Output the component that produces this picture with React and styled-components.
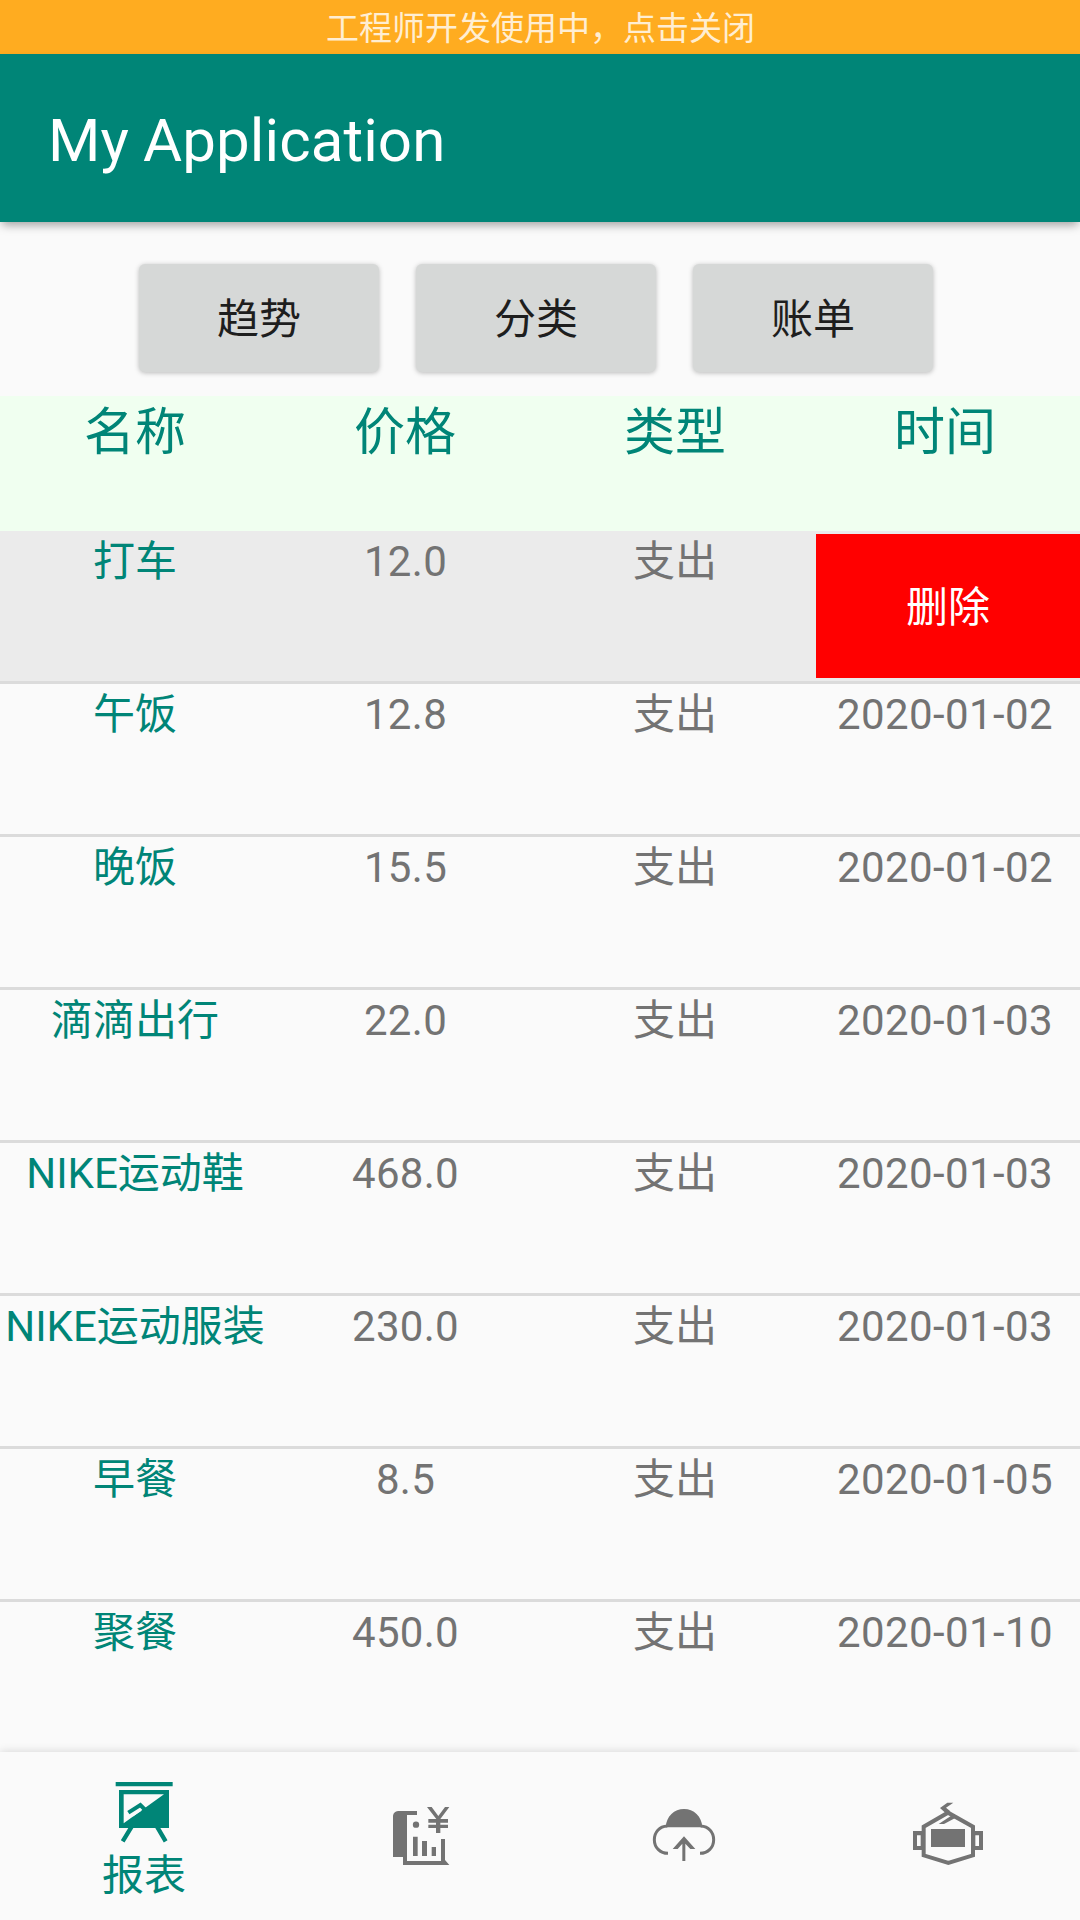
import React, { useState } from 'react';
import styled, { createGlobalStyle } from 'styled-components';

const GlobalStyle = createGlobalStyle`
  body {
    margin: 0;
    background: #fafafa;
  }
  * {
    box-sizing: border-box;
  }
`;

const Screen = styled.div`
  display: flex;
  flex-direction: column;
  width: 1080px;
  height: 1920px;
  overflow: hidden;
  background: #fafafa;
  color: #737373;
  font-family: Roboto, 'Noto Sans CJK SC', sans-serif;
  font-size: 42px;
`;

const DebugBanner = styled.div`
  flex: none;
  height: 54px;
  padding-left: 1px;
  line-height: 57px;
  background: #ffac20;
  color: #ffeed2;
  font-size: 33px;
  text-align: center;
`;

const AppBar = styled.header`
  flex: none;
  height: 168px;
  padding-left: 48px;
  background: #008577;
  box-shadow: 0 5px 9px -2px rgba(0, 0, 0, 0.36);
  color: #fff;
  font-size: 60px;
  line-height: 174px;
  letter-spacing: 0.1px;
  word-spacing: -1px;
`;

const ButtonBar = styled.div`
  flex: none;
  display: flex;
  gap: 37px;
  height: 174px;
  padding: 42px 0 0 139px;
`;

const Button = styled.button`
  width: 240px;
  height: 108px;
  padding: 0;
  border: none;
  border-radius: 6px;
  background: #d6d8d7;
  box-shadow: 0 1px 5px rgba(0, 0, 0, 0.26);
  color: #1e1e1e;
  font: inherit;
  line-height: 112px;
`;

const TableHead = styled.div`
  flex: none;
  display: grid;
  grid-template-columns: repeat(4, 270px);
  height: 135px;
  background: #f0fff0;
  color: #008577;
  font-size: 51px;
  line-height: 73px;
  text-align: center;
`;

const List = styled.div`
  flex: 1;
  min-height: 0;
  overflow: hidden;
`;

const Row = styled.div`
  display: grid;
  grid-template-columns: repeat(4, 270px);
  height: 153px;
  border-bottom: 3px solid ${props => (props.$last ? 'transparent' : '#dbdbdb')};
  background: ${props => (props.$open ? '#ebebeb' : 'transparent')};
  line-height: 61px;
  text-align: center;
`;

const Cell = styled.div`
  white-space: nowrap;
`;

const NameCell = styled(Cell)`
  color: #008577;
`;

const PriceCell = styled(Cell)`
  padding-left: 1px;
  letter-spacing: 0.3px;
`;

const DateCell = styled(Cell)`
  letter-spacing: 0.4px;
`;

const DeleteButton = styled.button`
  justify-self: end;
  width: 264px;
  height: 144px;
  margin-top: 3px;
  padding: 0;
  border: none;
  background: #f00;
  color: #fff;
  font: inherit;
  line-height: 147px;
`;

const BottomNav = styled.nav`
  flex: none;
  display: grid;
  grid-template-columns: 288px repeat(3, 264px);
  height: 168px;
  background: #fafafa;
  box-shadow: 0 0 9px rgba(0, 0, 0, 0.16);
`;

const NavItem = styled.a`
  display: flex;
  flex-direction: column;
  align-items: center;
  padding-top: ${props => (props.$active ? '24px' : '48px')};
  color: ${props => (props.$active ? '#008577' : '#737373')};
  line-height: 56px;

  svg {
    display: block;
    width: 72px;
    height: 72px;
  }
`;

const BoardIcon = () => (
  <svg viewBox="84 108 216 216" fill="currentColor">
    <path d="M107 126H278V139H107z" />
    <path fillRule="evenodd" d="M117 150H267V264H117zM131 163V250L252 163z" />
    <path d="M145 218L181 195L196 210" fill="none" stroke="currentColor" strokeWidth="12" />
    <path d="M157 227L183 210" stroke="#fafafa" strokeWidth="6" />
    <path d="M155 260L128 304M231 260L257 304" stroke="currentColor" strokeWidth="13" />
  </svg>
);

const LedgerIcon = () => (
  <svg viewBox="42 60 216 216" fill="currentColor">
    <path d="M69 231V107Q71 95 84 93H141V105H111V243H213V177H225V240L238 255H99V231z" />
    <circle cx="138" cy="134" r="9.5" />
    <path d="M129 170H143V228H129zM156 183H171V228H156zM185 201H198V228H185z" />
    <path d="M171 81H185L205 108L225 81H238L211 117H234V128H211V134H234V144H211V159H198V144H175V134H198V128H175V117H199z" />
  </svg>
);

const CloudIcon = () => (
  <svg viewBox="54 60 216 216" fill="currentColor">
    <path d="M107 142C109 108 133 87 162 87S215 108 217 142z" />
    <path
      d="M114 220C90 220 73 202 73 179C73 157 88 139 112 138M210 220C234 220 251 202 251 179C251 157 236 139 212 138"
      fill="none"
      stroke="currentColor"
      strokeWidth="9"
    />
    <path d="M128 207L162 169L196 207H181L166 191V243H157V191L143 207z" />
  </svg>
);

const RobotIcon = () => (
  <svg viewBox="66 60 216 216" fill="currentColor">
    <path d="M101 140V226L175 249L249 226V140L174 98z" fill="none" stroke="currentColor" strokeWidth="12" />
    <path d="M150 84L172 68H190L168 83L181 94L169 101z" />
    <path d="M146 132L187 105L200 112L162 132z" />
    <path d="M123 147H225V201H123z" />
    <path
      fillRule="evenodd"
      d="M69 153H96V210H69zM81 166V198H92V166zM254 153H279V210H254zM256 166V198H267V166z"
    />
  </svg>
);

const bills = [
  { name: '打车', price: '12.0', type: '支出', date: '2020-01-02' },
  { name: '午饭', price: '12.8', type: '支出', date: '2020-01-02' },
  { name: '晚饭', price: '15.5', type: '支出', date: '2020-01-02' },
  { name: '滴滴出行', price: '22.0', type: '支出', date: '2020-01-03' },
  { name: 'NIKE运动鞋', price: '468.0', type: '支出', date: '2020-01-03' },
  { name: 'NIKE运动服装', price: '230.0', type: '支出', date: '2020-01-03' },
  { name: '早餐', price: '8.5', type: '支出', date: '2020-01-05' },
  { name: '聚餐', price: '450.0', type: '支出', date: '2020-01-10' },
];

function BillRow({ bill, open, last }) {
  return (
    <Row $open={open} $last={last}>
      <NameCell>{bill.name}</NameCell>
      <PriceCell>{bill.price}</PriceCell>
      <Cell>{bill.type}</Cell>
      {open ? <DeleteButton>删除</DeleteButton> : <DateCell>{bill.date}</DateCell>}
    </Row>
  );
}

function App() {
  const [openRow] = useState(0);

  return (
    <Screen>
      <GlobalStyle />
      <DebugBanner>工程师开发使用中，点击关闭</DebugBanner>
      <AppBar>My Application</AppBar>
      <ButtonBar>
        <Button>趋势</Button>
        <Button>分类</Button>
        <Button>账单</Button>
      </ButtonBar>
      <TableHead>
        <div>名称</div>
        <div>价格</div>
        <div>类型</div>
        <div>时间</div>
      </TableHead>
      <List>
        {bills.map((bill, i) => (
          <BillRow key={i} bill={bill} open={i === openRow} last={i === bills.length - 1} />
        ))}
      </List>
      <BottomNav>
        <NavItem $active>
          <BoardIcon />
          <span>报表</span>
        </NavItem>
        <NavItem><LedgerIcon /></NavItem>
        <NavItem><CloudIcon /></NavItem>
        <NavItem><RobotIcon /></NavItem>
      </BottomNav>
    </Screen>
  );
}

export default App;
